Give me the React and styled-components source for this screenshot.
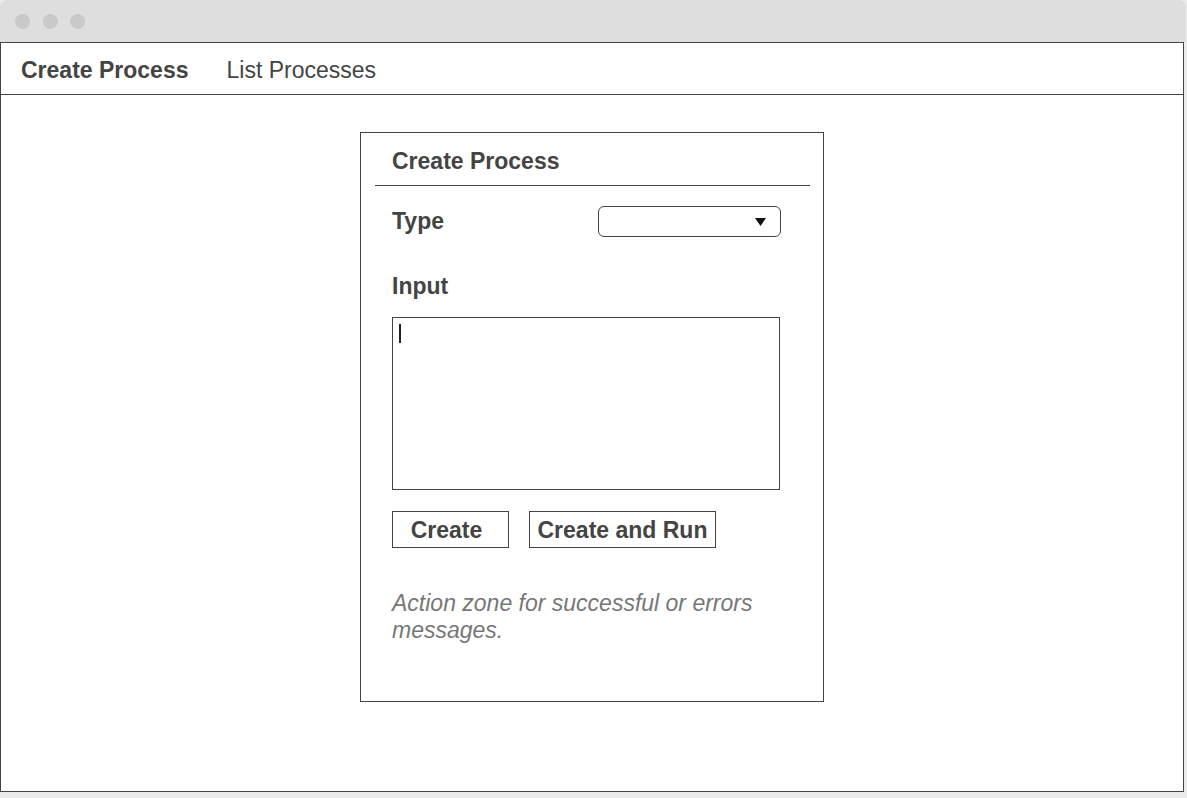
import React from "react";
import styled, { createGlobalStyle } from "styled-components";

const Global = createGlobalStyle`
  html, body { margin: 0; padding: 0; }
  body {
    background: #ececec;
    font-family: "Liberation Sans", Arial, sans-serif;
    color: #444;
  }
  * { box-sizing: border-box; }
`;

const Page = styled.div`
  width: 1187px;
  height: 798px;
  background: #ececec;
`;

const Window = styled.div`
  width: 1186px;
  display: flex;
  flex-direction: column;
`;

const TitleBar = styled.div`
  height: 42px;
  background: #dedede;
  border-radius: 7px 7px 0 0;
  display: flex;
  align-items: center;
  gap: 12.5px;
  padding-left: 15px;
`;

const Dot = styled.span`
  width: 15px;
  height: 15px;
  border-radius: 50%;
  background: #c9c9c9;
`;

const Body = styled.div`
  width: 1184px;
  height: 750px;
  background: #fff;
  border: 1px solid #444;
  display: flex;
  flex-direction: column;
`;

const Nav = styled.nav`
  height: 52px;
  border-bottom: 1px solid #444;
  display: flex;
  align-items: center;
  gap: 38px;
  padding-left: 20px;
  padding-top: 3px;
`;

const NavItem = styled.span`
  font-size: 23px;
  font-weight: ${(p) => (p.$active ? 700 : 400)};
  color: #444;
`;

const Main = styled.main`
  flex: 1;
  display: flex;
  justify-content: center;
  padding-top: 37px;
`;

const Panel = styled.section`
  width: 464px;
  height: 570px;
  border: 1px solid #444;
  display: flex;
  flex-direction: column;
`;

const PanelHeader = styled.h2`
  margin: 0 13px 0 14px;
  padding: 15px 17px 10px;
  border-bottom: 1px solid #444;
  font-size: 23px;
  line-height: 27px;
  font-weight: 700;
  color: #444;
`;

const Form = styled.div`
  display: flex;
  flex-direction: column;
  padding: 0 42px 0 31px;
`;

const Row = styled.div`
  margin-top: 20px;
  display: flex;
  align-items: center;
  justify-content: space-between;
`;

const Label = styled.label`
  font-size: 23px;
  line-height: 27px;
  font-weight: 700;
  color: #444;
  margin-top: ${(p) => p.$mt || 0}px;
`;

const Select = styled.div`
  width: 183px;
  height: 31px;
  border: 1px solid #444;
  border-radius: 6px;
  display: flex;
  align-items: center;
  justify-content: flex-end;
  padding-right: 14px;
`;

const TextBox = styled.div`
  margin-top: 17px;
  width: 388px;
  height: 173px;
  border: 1px solid #444;
  padding: 6px;
`;

const Caret = styled.span`
  display: block;
  width: 2px;
  height: 19px;
  background: #222;
`;

const Buttons = styled.div`
  margin-top: 21px;
  display: flex;
  gap: 20px;
`;

const Button = styled.button`
  width: ${(p) => p.$w}px;
  height: 37px;
  border: 1px solid #444;
  background: #fff;
  font-family: "Liberation Sans", Arial, sans-serif;
  font-size: 23px;
  font-weight: 700;
  color: #444;
  padding: 2px ${(p) => p.$pr || 0}px 0 0;
`;

const Message = styled.p`
  margin: 42px 0 0;
  font-size: 23px;
  line-height: 27px;
  font-style: italic;
  color: #777;
`;

export default function App() {
  return (
    <>
      <Global />
      <Page>
        <Window>
          <TitleBar>
            <Dot />
            <Dot />
            <Dot />
          </TitleBar>
          <Body>
            <Nav>
              <NavItem $active>Create Process</NavItem>
              <NavItem>List Processes</NavItem>
            </Nav>
            <Main>
              <Panel>
                <PanelHeader>Create Process</PanelHeader>
                <Form>
                  <Row>
                    <Label>Type</Label>
                    <Select>
                      <svg width="11" height="8" viewBox="0 0 11 8">
                        <polygon points="0,0 11,0 5.5,8" fill="#111" />
                      </svg>
                    </Select>
                  </Row>
                  <Label $mt={36}>Input</Label>
                  <TextBox>
                    <Caret />
                  </TextBox>
                  <Buttons>
                    <Button $w={117} $pr={8}>Create</Button>
                    <Button $w={187}>Create and Run</Button>
                  </Buttons>
                  <Message>Action zone for successful or errors messages.</Message>
                </Form>
              </Panel>
            </Main>
          </Body>
        </Window>
      </Page>
    </>
  );
}
